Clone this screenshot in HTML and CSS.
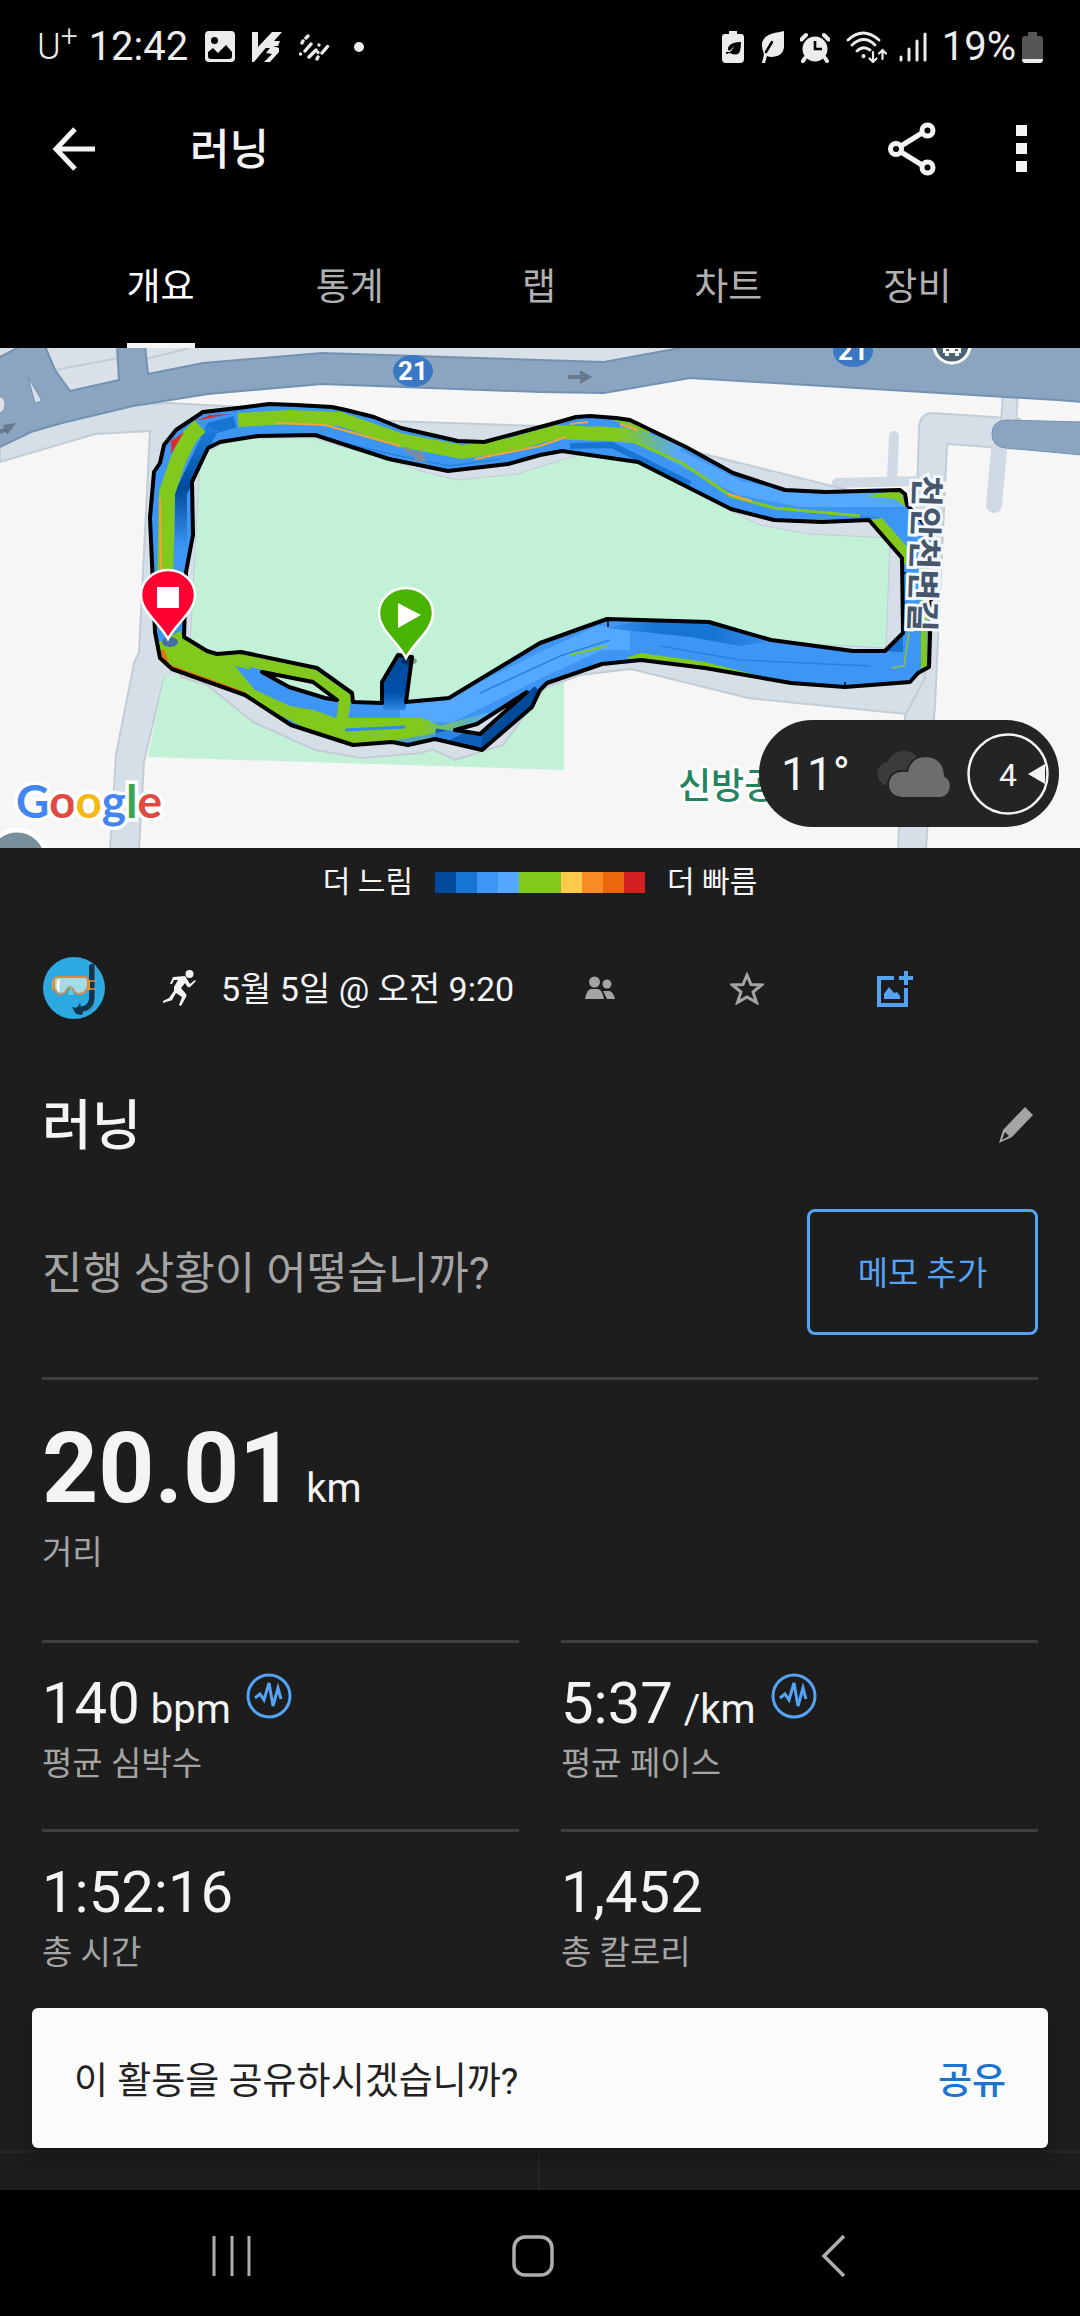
FILE: index.html
```html
<!DOCTYPE html>
<html lang="ko">
<head>
<meta charset="utf-8">
<meta name="viewport" content="width=device-width, initial-scale=1">
<title>러닝</title>
<link rel="stylesheet" href="styles.css">
</head>
<body>
<div class="screen">
  <div class="status">
    <div class="status-side">
      <span class="carrier">U<sup>+</sup></span>
      <span class="clock">12:42</span>
      <svg class="ic-photo" width="32" height="32" viewBox="0 0 32 32"><path fill="#ececec" fill-rule="evenodd" d="M5 0h22q4 0 4 4v23q0 4-4 4H5q-4 0-4-4V4q0-4 4-4zM4 21v4q0 3 3 3h18q3 0 3-3v-4l-6-7-8 8-5-5zM10.500 6a3.500 3.500 0 1 0 0 7 3.500 3.500 0 0 0 0-7z"/></svg>
      <svg width="30" height="30" viewBox="0 0 30 30"><path fill="#ececec" d="M0 0h6v15L20 0h10l-8 9h6l-2 5h-5l6 2v4l-9 10h-6l8-8-6-1 4-5h-5l4-4L2 30H0z"/></svg>
      <svg width="32" height="28" viewBox="0 0 32 28"><path fill="none" stroke="#ececec" stroke-width="3.400" stroke-linecap="round" d="M10 3 8 5M5 8 4 10M13 11 7 18M18 17l-7 7M2.500 21h0M21 12h0M20 19.500h0M29.500 13.500 24 20M19 26l1-2"/></svg>
      <svg class="ic-dot" width="10" height="10" viewBox="0 0 10 10"><circle cx="5" cy="5" r="5" fill="#ececec"/></svg>
    </div>
    <div class="status-side">
      <svg width="22" height="32" viewBox="0 0 22 32"><path fill="#ececec" d="M7 0h8v3h4q3 0 3 3v22q0 4-4 4H4q-4 0-4-4V6q0-3 3-3h4z"/><path d="M19 11q-9 0-12 4-2 3 0 5l6-5-5 6-4 0 0 2 4-1q8 4 10-2 1-4 1-9z"/></svg>
      <svg width="24" height="32" viewBox="0 0 24 32"><path fill="#ececec" d="M24 0v15q0 10-12 11-3 0-5-1l-2 7H2l2-9Q-3 6 14 2q6-1 10-2z"/><path d="M12 11 6 21" stroke="#000" stroke-width="2.500" stroke-linecap="round"/></svg>
      <svg width="30" height="31" viewBox="0 0 30 31"><circle cx="15" cy="17" r="12.500" fill="#ececec"/><path d="M1.500 7.500 6 3M28.500 7.500 24 3M5 26l-2 3M25 26l2 3" stroke="#ececec" stroke-width="4" stroke-linecap="round"/><path d="M15 9v8h7" fill="none" stroke="#000" stroke-width="2.600"/></svg>
      <svg width="41" height="32" viewBox="0 0 41 32" fill="none" stroke="#ececec" stroke-width="2.800" stroke-linecap="round"><path d="M2 9Q17-5 33 9M6 14Q18 3 29 14M11 20q6-6 13-1"/><path d="M17.500 25v.2" stroke-width="4"/><path stroke-width="2.200" d="M27 21v10M23.500 27.500 27 31l3.500-3.500M36.500 28V19M33 22.500l3.500-3.500 3.500 3.500"/></svg>
      <div class="status-battery">
        <svg width="28" height="30" viewBox="0 0 28 30"><path stroke="#ececec" stroke-width="3" stroke-linecap="round" d="M2 25v3M10 17v11M18 9v19M26 2v26"/></svg>
        <span class="percent">19%</span>
        <svg width="21" height="31" viewBox="0 0 21 31"><path fill="#565656" d="M6 0h9v4h3q3 0 3 3v20H0V7q0-3 3-3h3z"/><path fill="#ececec" d="M0 27h21q0 4-3 4H3q-3 0-3-4z"/></svg>
      </div>
    </div>
  </div>

  <header class="appbar">
    <button class="icon-btn" aria-label="뒤로"><svg width="44" height="44" viewBox="0 0 44 44"><path fill="none" stroke="#f4f4f4" stroke-width="5" d="M43 22H5M23 2 4 22l19 20"/></svg></button>
    <h1>러닝</h1>
    <button class="icon-btn share" aria-label="공유"><svg width="48" height="54" viewBox="0 0 48 54" fill="none" stroke="#f4f4f4" stroke-width="5"><path d="M13 24 34 11M13 30l21 13"/><circle cx="8" cy="27" r="5.500"/><circle cx="39.500" cy="8.500" r="5.500"/><circle cx="39.500" cy="45.500" r="5.500"/></svg></button>
    <button class="icon-btn" aria-label="더보기"><svg width="12" height="50" viewBox="0 0 12 50"><path fill="#f4f4f4" d="M0 1h11v11H0zM0 19h11v11H0zM0 37h11v11H0z"/></svg></button>
  </header>

  <nav class="tabs">
    <button class="tab active"><span>개요</span></button>
    <button class="tab"><span>통계</span></button>
    <button class="tab"><span>랩</span></button>
    <button class="tab"><span>차트</span></button>
    <button class="tab"><span>장비</span></button>
  </nav>

  <main>
    <section class="map">
      <svg class="map-canvas" viewBox="0 0 1080 500" role="img" aria-label="경로 지도">
        <defs>
          <path id="route" clip-rule="evenodd" fill-rule="evenodd" d="M155 284 160 310 172 321 245 347 291 377 353 397 392 394 408 397 435 391 482 402 532 359 540 342 547 335 602 316 641 312 705 320 791 335 845 339 910 334 918 325 929 319 930 287 933 190 921 172 907 157 905 146 900 142 826 144 785 142 733 125 686 99 630 72 616 70 590 68 576 69 555 75 540 79 484 94 458 93 401 80 374 69 346 62 332 59 296 57 269 56 238 60 203 64 176 82 164 97 160 115 154 124 150 170zM184 289 207 303 217 306 241 304 317 320 352 345 353 354 382 355 382 334 398 307 412 309 406 354 449 350 540 295 607 271 709 274 771 292 853 303 885 303 903 285 902 210 869 172 822 174 774 172 731 161 638 114 562 103 540 107 508 116 448 123 389 111 315 87 258 88 220 94 208 100 192 134 193 187 186 224zM262 324 313 334 337 352 325 350 289 339zM527 344 480 386 455 382 477 376z"/>
          <clipPath id="routeClip"><use href="#route" clip-rule="evenodd"/></clipPath>
          <linearGradient id="startFade" x1="0" y1="0" x2="0" y2="1"><stop offset="0" stop-color="#004a9c"/><stop offset=".7" stop-color="#004fa8"/><stop offset="1" stop-color="#2f86e4"/></linearGradient>
          <linearGradient id="cornerFade" gradientUnits="userSpaceOnUse" x1="0" y1="80" x2="0" y2="200"><stop offset="0" stop-color="#1f7ee0"/><stop offset=".5" stop-color="#004a9c"/><stop offset="1" stop-color="#3d96f4"/></linearGradient>
          <linearGradient id="greenOut" gradientUnits="userSpaceOnUse" x1="620" y1="0" x2="680" y2="0"><stop offset="0" stop-color="#82c91e"/><stop offset="1" stop-color="#55a8ff"/></linearGradient>
          <linearGradient id="greenBottom" gradientUnits="userSpaceOnUse" x1="420" y1="0" x2="490" y2="0"><stop offset="0" stop-color="#82c91e"/><stop offset="1" stop-color="#55a8ff"/></linearGradient>
          <linearGradient id="darkFade" gradientUnits="userSpaceOnUse" x1="600" y1="0" x2="790" y2="0"><stop offset="0" stop-color="#3d96f4"/><stop offset=".3" stop-color="#1874d2"/><stop offset=".6" stop-color="#1874d2"/><stop offset="1" stop-color="#3d96f4"/></linearGradient>
        </defs>
        <rect width="1080" height="500" fill="#f6f6f6"/>
        <!-- side roads -->
        <path fill="#d9e0e8" d="M0 0H690L604 20 322 12 130 60 0 90z"/>
        <path fill="none" stroke="#c3cdd5" stroke-width="2" d="M55 22 119 10M146 11 190 0"/>
        <g fill="#d6dfe7" stroke="#c3cdd5" stroke-width="2">
          <path d="M0 90 133 57 170 55 240 59 200 120 180 290 205 325 181 329 164 329 144 414 139 502H110L116 407 134 315 139 304 150 83 95 86 0 114z"/>
          <path d="M919 80Q920 65 933 65L1020 71 1018 101 947 96 935 357 934 370 926 502H898L905 366 913 280z"/>
          <path d="M1003 45h15l-2 30h-15z"/>
        </g>
        <g fill="none" stroke="#d0dae4" stroke-linecap="round">
          <path stroke-width="16" d="M999 102 994 157"/><path stroke-width="10" d="M894 88 892 132M837 135 918 133"/>
        </g>
        <!-- park -->
        <path fill="#c3f1d7" d="M164 329 148 409 564 422 564 325 300 300z"/>
        <path fill="#d6dfe7" stroke="#c3cdd5" stroke-width="2" d="M181 329 207 337 253 374 315 402 362 410 422 405 432 401 455 412 503 397 545 340 580 327 631 321 748 350 906 366 925 330 920 170 880 150 600 80 300 70 160 110z"/>
        <path fill="#c3f1d7" stroke="#c3cdd5" stroke-width="1" d="M200 110 230 90 312 90 389 112 424 124 458 132 517 126 578 107 640 114 733 164 760 177 809 186 890 190 886 300 700 290 600 285 450 360 340 365 190 300z"/>
        <!-- highway -->
        <path fill="#8ba5c1" stroke="#7292b3" stroke-width="2" d="M-2 10 21-2H45L55 22 70 43 119 32 117-2H145L148 26 203 15 322 5 540 12 604 14 680 0V-2H1082V54L1057 52 690 30 604 45 540 44 322 36 208 46 133 58 62 75 31 84 0 99H-2z"/>
        <path fill="#d9e0e8" stroke="#7292b3" stroke-width="1" d="M28 29 35 55 42 53zM-1 48Q6 50 5 57 5 64-1 65z"/>
        <path fill="#8ba5c1" stroke="#7292b3" stroke-width="1" d="M1082 74 1006 72Q992 73 992 86 992 99 1006 100L1082 107z"/>
        <path fill="none" stroke="#66798e" stroke-width="4" d="M568 29h20M0 84l12-5"/>
        <path fill="#66798e" d="m580 22 12 7-12 7zM3 77l13-2-9 12z"/>

        <!-- recorded route -->
        <use href="#route" fill="#3d96f4"/>
        <g clip-path="url(#routeClip)" fill="none">
          <path stroke="#55a8ff" stroke-width="14" d="M620 78 690 115 740 140 800 152 905 152"/>
          <path stroke="#55a8ff" stroke-width="24" d="M400 364 450 362 545 315 600 290 630 290"/>
          <path stroke="#1874d2" stroke-width="6" d="M570 98 612 97 660 121 690 136"/>
          <path fill="url(#darkFade)" d="M605 280 640 273 709 275 771 293 740 298 690 289z"/>
          <path fill="#1874d2" d="M885 303l18-20v21z"/>
          <path stroke="#2a82e0" stroke-width="1.500" d="M660 298 740 312 870 318M480 345 560 308 610 292M320 90 400 108 450 118 500 111M810 165 880 170"/>
          <path stroke="#1874d2" stroke-width="12" d="M205 92 212 80 235 74"/>
          <path stroke="url(#cornerFade)" stroke-width="12" d="M213 80 204 97 181 145 181 200"/>
          <path stroke="#82c91e" stroke-width="16" d="M165 235 167 145 178 112 190 88 200 78"/>
          <path stroke="#82c91e" stroke-width="14" d="M238 72 290 69 340 71 400 92 462 104 510 97 556 84 600 86"/>
          <path stroke="url(#greenOut)" stroke-width="14" d="M595 85 634 88 680 104"/>
          <path stroke="#82c91e" stroke-width="3" d="M630 92 682 115 731 148 774 160 860 168M612 70 650 84"/>
          <path stroke="#f0a43c" stroke-width="2" d="M275 75 325 77 400 98M475 111 540 98 566 89M728 146 752 153M570 76 588 74M620 76 638 82M161 225 160 150"/>
          <path fill="#d9302c" d="M171 93 184 84 171 106zM195 73 210 67 230 66z"/>
          <path fill="#82c91e" d="M865 148 900 142 907 160 895 151zM869 172 882 170 908 200V222L902 210z"/>
          <path fill="#82c91e" d="M625 310 641 305 705 314 800 338 705 321z"/>
          <path stroke="#82c91e" stroke-width="2" d="M570 307 607 298"/>
          <path stroke="#82c91e" stroke-width="6" d="M924 190V320"/>
          <path stroke="#7fb866" stroke-width="2" d="M909 285 904 318 892 320"/>
          <path stroke="#82c91e" stroke-width="34" d="M165 291 172 304 205 322 245 336"/>
          <path stroke="#82c91e" stroke-width="20" d="M220 322 260 346 310 371 355 388 430 382"/>
          <path stroke="url(#greenBottom)" stroke-width="12" d="M345 376 420 376 440 384 490 370"/>
          <path stroke="#2f8aec" stroke-width="3" d="M345 382 405 379"/>
          <path stroke="#82c91e" stroke-width="12" d="M210 312 241 311 313 327 345 350 342 374"/>
          <path fill="#3d96f4" d="M235 318 255 323 289 340 337 354 336 366 290 358 255 342z"/>
          <path stroke="#ea7010" stroke-width="4" d="M162 302 168 318 245 346"/>
          <path fill="url(#startFade)" d="M380 334 398 304 415 309 405 362 383 362z"/>
          <path stroke="#004a9c" stroke-width="16" d="M476 394 500 382 540 344"/>
          <path stroke="#0f5fb8" stroke-width="13" d="M435 387 482 395"/>
          <path fill="#3d96f4" d="M390 393 430 386 480 377 440 397 406 400z" opacity=".7"/>
        </g>
        <use href="#route" fill="none" stroke="#000" stroke-width="4" stroke-linejoin="round"/>
        <path fill="#7a8c9d" d="m405 98 12 7 3-4 7 13-14-1 2-4-12-7z"/>
        <path stroke="#000" stroke-width="1.500" d="M608 271v8M845 334v6M902 225h5M902 256h5"/>

        <!-- place labels -->
        <ellipse cx="413" cy="23" rx="20" ry="16" fill="#3a78c4"/>
        <text class="shield" x="413" y="32">21</text>
        <ellipse cx="853" cy="3" rx="20" ry="16" fill="#3a78c4"/>
        <text class="shield" x="853" y="12">21</text>
        <circle cx="952" cy="-3" r="18" fill="#4b6374" stroke="#fff" stroke-width="3"/>
        <path fill="#fff" d="M943-5h18V5h-2v3h-4V5h-6v3h-4V5h-2z"/><path fill="#4b6374" d="M945-5h14v4h-14zM946 1h3v2h-3zM955 1h3v2h-3z"/>
        <text class="street" transform="translate(915 127) rotate(92)">천안천변길</text>
        <text class="park" x="678" y="451">신방공</text>
        <circle cx="17" cy="512" r="30" fill="#78909c" stroke="#fff" stroke-width="5"/>
        <text class="google" x="16" y="470"><tspan fill="#4285f4">G</tspan><tspan fill="#e04a3f">o</tspan><tspan fill="#f6b913">o</tspan><tspan fill="#4285f4">g</tspan><tspan fill="#3aa757">l</tspan><tspan fill="#e04a3f">e</tspan></text>

        <!-- finish and start pins -->
        <ellipse cx="170" cy="294" rx="8" ry="5" fill="#3f6fa3"/>
        <path fill="#ff0030" stroke="#fff" stroke-width="2.500" d="M168 291C160 275 141 264 141 247a27 25 0 0 1 54 0C195 264 176 275 168 291z"/>
        <path fill="#fff" d="M157 239h22v21h-22z"/>
        <ellipse cx="409" cy="313" rx="8" ry="4" fill="#000" opacity=".35"/>
        <path fill="#48b300" stroke="#fff" stroke-width="2.500" d="M406 310C398 294 379 282 379 265a27 25 0 0 1 54 0C433 282 414 294 406 310z"/>
        <path fill="#fff" d="m398 255 23 12-23 13z"/>
      </svg>
      <div class="weather">
        <span class="temp">11°</span>
        <svg class="cloud" width="82" height="46" viewBox="0 0 82 46"><path fill="#3b3b3b" d="M12 34A12 12 0 0 1 14 11Q20 0 31 0q12 0 17 12L30 34z"/><path fill="#6d6d6d" stroke="#242424" stroke-width="2" d="M30 47H68a12 12 0 0 0 4-22Q71 6 53 5 38 5 34 20 17 18 15 33q0 13 15 14z"/></svg>
        <svg width="82" height="82" viewBox="0 0 82 82"><circle cx="41" cy="41" r="39.500" fill="none" stroke="#f4f4f4" stroke-width="2.500"/><path fill="#f4f4f4" d="m61 41 17-10v20z"/><text class="wind" x="41" y="53">4</text></svg>
      </div>
    </section>

    <div class="legend">
      <span>더 느림</span>
      <div class="scale"><i class="s1"></i><i class="s2"></i><i class="s3"></i><i class="s4"></i><i class="s5"></i><i class="s5"></i><i class="s6"></i><i class="s7"></i><i class="s8"></i><i class="s9"></i></div>
      <span>더 빠름</span>
    </div>

    <div class="meta">
      <svg class="avatar" width="62" height="62" viewBox="0 0 62 62"><circle cx="31" cy="31" r="31" fill="#2aaae1"/><path fill="none" stroke="#0c3550" stroke-width="6" stroke-linecap="round" d="M49 10v32q-1 11-14 11"/><path fill="#0c3550" d="M29 50l5 1 3-5 1 4 5-2-3 6-1 4-6-1z"/><path stroke="#6d93a8" stroke-width="1" fill="none" d="M52 8v35q-2 10-12 12"/><path stroke="#d28a4e" fill="none" stroke-width="1.500" d="M46 24h7M46 32h7"/><path fill="#f5a300" d="M9 23h5v10H9zM43 23h4v10h-4z"/><path fill="#a5dbe6" stroke="#d28a4e" stroke-width="2" d="M15 20h27q3 0 3 3v7q-3 7-9 7-4 0-6-5l-3-2-3 2q-2 5-6 5-6 0-7-7v-7q0-3 4-3z"/><path fill="#fff" d="M14 24q2-4 3 0l-1 8q2 4-1 2-2-3-1-10z"/><path fill="#6bc3dd" d="m28 28 3 10h-6z"/></svg>
      <svg class="runner" width="34" height="36" viewBox="0 0 34 36" fill="#f4f4f4"><circle cx="26.500" cy="4" r="4"/><path d="M10 7 22 6l5 8 5-4 1 1-6 6q-2 1-3-1l-2-3-4 5 5 6q1 2 0 3l-5 9-2-1 3-8-6-4-4 7q-1 1-3 1L0 33v-2l6-3 5-7 0-4 4-7-4 0-2 4-2 0z"/></svg>
      <time class="date">5월 5일 @ 오전 9:20</time>
      <button class="meta-btn" aria-label="친구"><svg width="30" height="24" viewBox="0 0 30 24" fill="#a4a4a4"><circle cx="9.500" cy="6" r="5.500"/><circle cx="22" cy="8" r="4.500"/><path d="M0 23q2-10 6-10h7q4 0 6 10zM18 15h6q4 0 6 8h-8z"/></svg></button>
      <button class="meta-btn" aria-label="즐겨찾기"><svg width="34" height="34" viewBox="0 0 34 34"><path fill="none" stroke="#a4a4a4" stroke-width="3" d="m17 4 4 9.500 10.500.5-8.500 7 3.500 10.500L17 26l-9.500 5.500L11 21l-8.500-7L13 13.500z"/></svg></button>
      <button class="meta-btn" aria-label="사진 추가"><svg width="38" height="38" viewBox="0 0 38 38"><path fill="none" stroke="#55a3f5" stroke-width="4" d="M19 9H4v27h27V19M24 9h14M31 2v14"/><path fill="#55a3f5" d="M9 30V25l5-7 5 6 3-1 3 4v3z"/></svg></button>
    </div>

    <div class="title-row">
      <h2>러닝</h2>
      <button class="icon-btn" aria-label="편집"><svg width="38" height="38" viewBox="0 0 38 38"><path fill="#a4a4a4" fill-rule="evenodd" d="M27 1 35 9 14 31 1 37 5 24zM7 26 4 34 11 30z"/></svg></button>
    </div>

    <div class="note-row">
      <p>진행 상황이 어떻습니까?</p>
      <button class="note-btn">메모 추가</button>
    </div>

    <section class="metrics">
      <div class="metric wide">
        <div class="value"><strong>20.01</strong><small>km</small></div>
        <p class="label">거리</p>
      </div>
      <div class="metric">
        <div class="value"><b>140</b><small>bpm</small><svg width="46" height="46" viewBox="0 0 46 46"><g fill="none" stroke="#55a3f5" stroke-width="3"><circle cx="23" cy="23" r="21"/><path d="m9 25 5-4 4 6 5-17 4 23 5-18 3 11"/></g></svg></div>
        <p class="label">평균 심박수</p>
      </div>
      <div class="metric">
        <div class="value"><b>5:37</b><small>/km</small><svg width="46" height="46" viewBox="0 0 46 46"><g fill="none" stroke="#55a3f5" stroke-width="3"><circle cx="23" cy="23" r="21"/><path d="m9 25 5-4 4 6 5-17 4 23 5-18 3 11"/></g></svg></div>
        <p class="label">평균 페이스</p>
      </div>
      <div class="metric">
        <div class="value"><b>1:52:16</b></div>
        <p class="label">총 시간</p>
      </div>
      <div class="metric">
        <div class="value"><b>1,452</b></div>
        <p class="label">총 칼로리</p>
      </div>
    </section>

    <div class="actions"><i></i><i></i></div>

    <div class="snackbar" role="status">
      <span>이 활동을 공유하시겠습니까?</span>
      <button>공유</button>
    </div>
  </main>

  <footer class="sysnav">
    <button aria-label="최근 앱"><svg width="40" height="42" viewBox="0 0 40 42"><path stroke="#adadad" stroke-width="3" d="M2 1v40M20 1v40M37 1v40"/></svg></button>
    <button aria-label="홈"><svg width="42" height="42" viewBox="0 0 42 42"><rect x="2" y="2" width="38" height="38" rx="11" fill="none" stroke="#adadad" stroke-width="3.500"/></svg></button>
    <button aria-label="뒤로"><svg width="42" height="42" viewBox="0 0 42 42"><path fill="none" stroke="#adadad" stroke-width="3.500" d="M30 1 10 21l20 20"/></svg></button>
  </footer>
</div>
</body>
</html>
```
FILE: styles.css
```css
* { box-sizing: border-box; }

body {
  margin: 0;
  background: #000;
  color: #f4f4f4;
  font-family: Roboto, "Noto Sans CJK KR", sans-serif;
}

h1, h2, p { margin: 0; font-weight: 500; }

button {
  padding: 0;
  border: 0;
  background: none;
  color: inherit;
  font: inherit;
}

svg { display: block; flex: none; }

.screen { display: flex; flex-direction: column; min-height: 100vh; }

/* status bar */
.status {
  display: flex;
  justify-content: space-between;
  align-items: center;
  height: 94px;
  padding: 0 37px;
  color: #ececec;
  font-size: 40px;
  line-height: 48px;
}
.status-side { display: flex; align-items: center; gap: 16px; }
.status-battery { display: flex; align-items: center; gap: 6px; margin-left: -4px; }
.carrier { font-weight: 300; font-size: 36px; }
.carrier sup { font-size: 30px; line-height: 0; }
.clock { margin-left: -5px; }
.percent { margin-left: 9px; }
.ic-dot { margin-left: 8px; }

/* app bar */
.appbar { display: flex; align-items: center; height: 110px; padding: 0 52px; }
.appbar h1 { flex: 1; margin-left: 94px; padding-top: 2px; font-size: 43px; line-height: 60px; }
.share { margin-right: 80px; }

/* tabs */
.tabs {
  display: grid;
  grid-template-columns: repeat(5, 1fr);
  height: 144px;
  padding: 20px 68px 0 66px;
}
.tab { display: flex; justify-content: center; color: #b0b0b0; font-size: 37px; line-height: 54px; }
.tab span { height: 100%; padding-top: 37px; border-bottom: 5px solid transparent; }
.tab.active { color: #fff; }
.tab.active span { border-color: #f4f4f4; }

main { position: relative; flex: 1; background: #1d1d1d; }

/* map */
.map { position: relative; }
.map-canvas { width: 100%; height: auto; }
.map text { font-family: Roboto, "Noto Sans CJK KR", sans-serif; }
.shield { fill: #fff; font-size: 26px; font-weight: 700; text-anchor: middle; }
.street { fill: #46566b; stroke: #f4f8fc; stroke-width: 6px; paint-order: stroke; font-size: 34px; font-weight: 700; }
.park { fill: #26835f; stroke: #fff; stroke-width: 5px; paint-order: stroke; font-size: 36px; font-weight: 500; }
.map .google { stroke: #fff; stroke-width: 7px; paint-order: stroke; font-family: Lato, sans-serif; font-size: 46px; font-weight: 700; }
.weather {
  position: absolute;
  right: 21px;
  bottom: 21px;
  display: flex;
  align-items: center;
  height: 107px;
  padding: 0 10px 0 22px;
  border-radius: 54px;
  background: #242424;
  font-size: 46px;
}
.cloud { margin: 0 12px 0 23px; }
.wind { fill: #f4f4f4; font-size: 32px; text-anchor: middle; }

/* pace legend */
.legend {
  display: flex;
  justify-content: center;
  align-items: center;
  gap: 22px;
  height: 68px;
  font-size: 30px;
  line-height: 40px;
}
.scale { display: flex; }
.scale i { width: 21px; height: 21px; }
.s1 { background: #004a9c; }
.s2 { background: #1874d2; }
.s3 { background: #3d96f4; }
.s4 { background: #55a8ff; }
.s5 { background: #82c91e; }
.s6 { background: #fbcb4b; }
.s7 { background: #f98b26; }
.s8 { background: #ea670c; }
.s9 { background: #d32020; }

/* activity header */
.meta { display: flex; align-items: center; height: 62px; margin-top: 41px; padding: 0 43px; }
.runner { margin: 0 24px 0 58px; }
.date { margin-right: 12px; padding-bottom: 4px; font-size: 34px; }
.meta-btn { display: flex; justify-content: center; width: 147px; }

.title-row {
  display: flex;
  justify-content: space-between;
  align-items: center;
  margin-top: 67px;
  padding: 0 44px 0 42px;
}
.title-row h2 { padding-top: 4px; font-size: 54px; line-height: 74px; }

.note-row {
  display: flex;
  justify-content: space-between;
  align-items: center;
  margin: 45px 42px 42px;
}
.note-row p { padding-bottom: 4px; color: #a4a4a4; font-size: 44px; font-weight: 400; }
.note-btn {
  width: 231px;
  height: 126px;
  padding-bottom: 2px;
  border: 3px solid #55a3f5;
  border-radius: 8px;
  color: #55a3f5;
  font-size: 33px;
}

/* metrics */
.metrics { display: grid; grid-template-columns: 1fr 1fr; column-gap: 42px; padding: 0 42px; }
.metric { padding: 27px 0 45px; border-top: 3px solid #3d3d3d; }
.wide { grid-column: 1 / -1; padding: 33px 0 67px; }
.value { display: flex; align-items: baseline; }
.value b { font-size: 58px; font-weight: 400; line-height: 66px; }
.value strong { font-size: 98px; line-height: 112px; }
.value small { margin-left: 11px; font-size: 40px; line-height: 44px; }
.value svg { align-self: flex-start; margin: 3px 0 0 15px; }
.label { margin-top: 8px; color: #a4a4a4; font-size: 33px; font-weight: 400; line-height: 40px; }

.actions {
  display: grid;
  grid-template-columns: 1fr 1fr;
  height: 40px;
  margin-top: 132px;
  border-top: 3px solid #252525;
}
.actions i:first-child { border-right: 2px solid #252525; }

.snackbar {
  position: absolute;
  right: 32px;
  bottom: 42px;
  left: 32px;
  display: flex;
  justify-content: space-between;
  align-items: center;
  height: 140px;
  padding: 0 42px;
  border-radius: 6px;
  background: #fbfbfb;
  box-shadow: 0 12px 16px rgba(0, 0, 0, .3);
  color: #222;
  font-size: 37px;
}
.snackbar button { color: #1b75cf; font-weight: 500; }

/* system navigation */
.sysnav { display: flex; justify-content: space-between; align-items: center; height: 126px; padding: 6px 224px 0 212px; }
```
